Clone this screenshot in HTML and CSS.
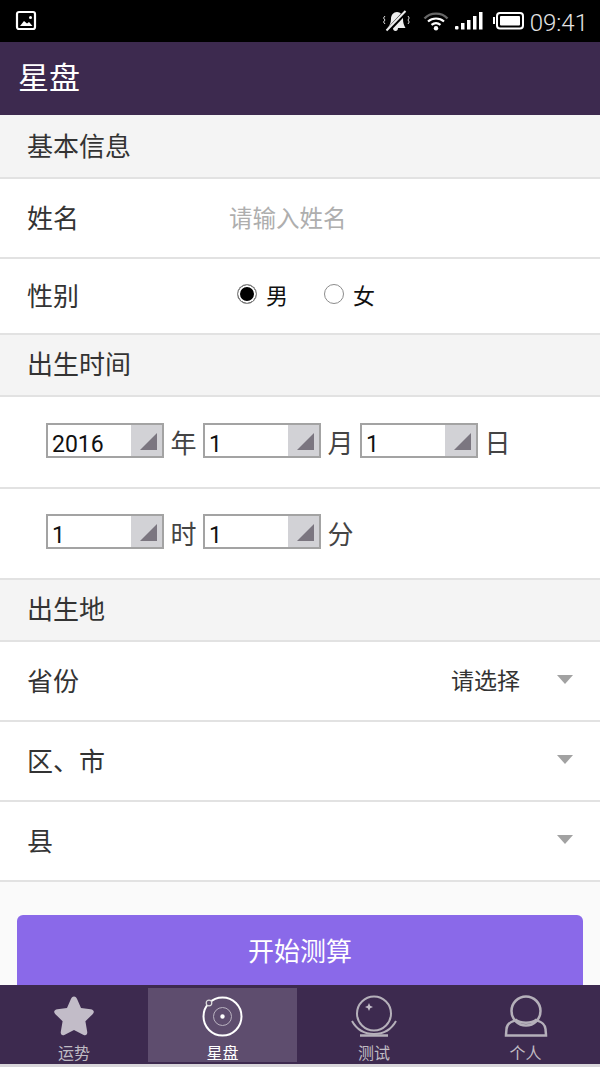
FILE: index.html
```html
<!DOCTYPE html>
<html lang="zh">
<head>
<meta charset="utf-8">
<title>星盘</title>
<link rel="stylesheet" href="styles.css">
</head>
<body>
<div class="page">
  <div class="statusbar">
    <svg class="st-pic" width="26" height="22" viewBox="0 0 26 22"><rect x="2" y="2" width="18" height="17" rx="2" fill="none" stroke="#fff" stroke-width="2.2"/><path d="M5 16l4-5 3 2.500 2-1.500 3.500 4z" fill="#fff"/><circle cx="15.500" cy="7.500" r="1.500" fill="#fff"/></svg>
    <div class="st-right">
      <svg width="27" height="22" viewBox="0 0 27 22"><path d="M14 2c3.500 0 6 3 6 7 0 4 1 6 2.500 9H15c0 2-1 3-2.500 3S10 20 10 18H4.500C6.500 15 8 13 8 9c0-4 2.500-7 6-7z" fill="#eee"/><path d="M4 21.500L23 1.500" stroke="#000" stroke-width="4.500"/><path d="M3.500 20.500L22.500 1" stroke="#eee" stroke-width="2"/><path d="M2 6l-1.500 2 1.500 2-1.500 2 1.500 2M25 6l1.200 2-1.200 2 1.200 2-1.200 2" fill="none" stroke="#ddd" stroke-width="1"/></svg>
      <svg class="st-wifi" width="26" height="20" viewBox="0 0 26 20"><path d="M1.500 7.500C7.500 1 18.500 1 24.500 7.500" fill="none" stroke="#666" stroke-width="2.400"/><path d="M5 10.500c4.500-4 11.500-4 16 0M8.500 13.800c2.800-2.200 6.200-2.200 9 0" fill="none" stroke="#fff" stroke-width="2.200"/><circle cx="13" cy="17.200" r="2.200" fill="#fff"/></svg>
      <svg class="st-signal" width="28" height="20" viewBox="0 0 28 20"><rect x="0" y="15" width="3.500" height="3.500" rx="1" fill="#fff"/><rect x="6" y="12" width="3.500" height="6.500" fill="#fff"/><rect x="12" y="9" width="3.500" height="9.500" fill="#fff"/><rect x="18" y="5" width="3.500" height="13.500" fill="#fff"/><rect x="24" y="1" width="3.500" height="17.500" fill="#fff"/></svg>
      <svg class="st-batt" width="31" height="20" viewBox="0 0 31 20"><rect x="4" y="2" width="26" height="15.500" rx="3" fill="none" stroke="#fff" stroke-width="2"/><rect x="7" y="5" width="20" height="9.500" rx="1" fill="#fff"/><rect x="0" y="6" width="2" height="7" fill="#fff"/></svg>
      <span class="st-time">09:41</span>
    </div>
  </div>
  <header class="appbar">星盘</header>
  <main class="content">
    <div class="section">基本信息</div>
    <div class="row row-name"><span class="label">姓名</span><span class="placeholder">请输入姓名</span></div>
    <div class="row row-sex">
      <span class="label">性别</span>
      <div class="radios">
        <span class="radio checked"></span><span class="radio-text">男</span>
        <span class="radio radio-second"></span><span class="radio-text">女</span>
      </div>
    </div>
    <div class="section section-s">出生时间</div>
    <div class="row row-date row-date-1">
      <span class="spinner"><span class="value">2016</span><span class="arrow"><i></i></span></span><span class="unit">年</span>
      <span class="spinner"><span class="value">1</span><span class="arrow"><i></i></span></span><span class="unit">月</span>
      <span class="spinner"><span class="value">1</span><span class="arrow"><i></i></span></span><span class="unit">日</span>
    </div>
    <div class="row row-date row-date-2">
      <span class="spinner"><span class="value">1</span><span class="arrow"><i></i></span></span><span class="unit">时</span>
      <span class="spinner"><span class="value">1</span><span class="arrow"><i></i></span></span><span class="unit">分</span>
    </div>
    <div class="section section-s">出生地</div>
    <div class="row row-place"><span class="label">省份</span><span class="choose">请选择</span><i class="caret"></i></div>
    <div class="row row-place"><span class="label">区、市</span><i class="caret"></i></div>
    <div class="row row-place"><span class="label">县</span><i class="caret"></i></div>
    <div class="btn-wrap"><div class="btn">开始测算</div></div>
  </main>
  <nav class="tabbar">
    <div class="tab tab-a">
      <svg width="44" height="46" viewBox="0 0 44 46"><path d="M22 2.500c1.500 0 2.500 1 3.300 3l3.700 8.500 9.600 1.200c3.200.4 4.300 2.700 2 5l-7.200 7 1.800 10.500c.5 3-1.500 4.300-4 3l-9.200-4.800-9.200 4.800c-2.500 1.300-4.500 0-4-3l1.800-10.500-7.200-7c-2.300-2.300-1.200-4.600 2-5L15 14l3.700-8.500c.8-2 1.800-3 3.300-3z" fill="#c2bcc8"/></svg>
      <span class="tab-text">运势</span>
    </div>
    <div class="tab tab-b active">
      <svg width="44" height="46" viewBox="0 0 44 46"><circle cx="21.500" cy="22.500" r="19" fill="none" stroke="#fff" stroke-width="2"/><circle cx="21.500" cy="22.500" r="9" fill="none" stroke="#b9b2c0" stroke-width="1"/><circle cx="21.500" cy="22.500" r="2.200" fill="#fff"/><circle cx="8" cy="9" r="2.800" fill="#5e4d6e" stroke="#ddd" stroke-width="1.200"/></svg>
      <span class="tab-text">星盘</span>
    </div>
    <div class="tab tab-c">
      <svg width="48" height="46" viewBox="0 0 48 46"><circle cx="24" cy="19.500" r="17" fill="none" stroke="#b5b0ba" stroke-width="2"/><path d="M2 27c5 9 12 13 22 13s17-4 22-13" fill="none" stroke="#b5b0ba" stroke-width="2"/><path d="M10 41.500h28" stroke="#b5b0ba" stroke-width="2.500"/><path d="M19 9l1.200 2.800L23 13l-2.800 1.200L19 17l-1.200-2.800L15 13l2.800-1.200z" fill="#c2bcc8"/></svg>
      <span class="tab-text">测试</span>
    </div>
    <div class="tab tab-d">
      <svg width="44" height="46" viewBox="0 0 44 46"><circle cx="22" cy="17" r="14.500" fill="none" stroke="#b5b0ba" stroke-width="2.500"/><path d="M12 26c-3 1.500-9 2-9.500 9-.2 3-.5 5-.5 6.500h40c0-1.500-.3-3.500-.5-6.500-.5-7-6.500-7.500-9.500-9-4 3.500-16 3.500-20 0z" fill="none" stroke="#b5b0ba" stroke-width="2.500"/></svg>
      <span class="tab-text">个人</span>
    </div>
  </nav>
  <div class="bottom-strip"></div>
</div>
</body>
</html>
```

FILE: styles.css
```css
* { box-sizing: border-box; }
html, body { margin: 0; padding: 0; }
body { width: 600px; height: 1067px; overflow: hidden; font-family: "Noto Sans CJK SC", "Roboto", sans-serif; background: #fafafa; }
.page { width: 600px; height: 1067px; display: flex; flex-direction: column; }

.statusbar { flex: 0 0 42px; height: 42px; background: #000; display: flex; align-items: center; justify-content: space-between; padding: 0 12px 0 15px; }
.st-pic { display: block; }
.st-right { display: flex; align-items: center; }
.st-wifi { margin-left: 13px; }
.st-signal { margin-left: 6px; }
.st-batt { margin-left: 10px; }
.st-time { font-family: Roboto, sans-serif; font-weight: 300; font-size: 24px; color: #e4e4e4; margin-left: 6px; line-height: 38px; padding-top: 4px; }

.appbar { flex: 0 0 73px; background: #3d2a4f; color: #fff; font-size: 31px; line-height: 68px; padding-left: 18px; }

.content { flex: 1 1 0; min-height: 0; overflow: hidden; display: flex; flex-direction: column; }

.section { flex: 0 0 auto; height: 64px; background: #f4f4f4; border-bottom: 2px solid #e2e2e2; color: #333; font-size: 26px; line-height: 60px; padding-left: 27px; }
.section-s { height: 62px; line-height: 56px; }

.row { flex: 0 0 auto; display: flex; align-items: center; background: #fff; border-bottom: 2px solid #e2e2e2; }
.label { color: #333; font-size: 26px; padding-left: 27px; }
.row-name { height: 80px; padding-bottom: 4px; }
.row-sex { height: 76px; padding-bottom: 4px; }
.placeholder { margin-left: 150px; color: #aeaeae; font-size: 23.500px; padding-top: 2px; }

.radios { display: flex; align-items: center; margin-left: 158px; color: #111; font-size: 22px; }
.radio { width: 20px; height: 20px; border-radius: 50%; border: 1.500px solid #8c8c8c; background: #fff; display: block; }
.radio.checked { background: #000; box-shadow: inset 0 0 0 2px #fff; }
.radio-text { margin-left: 9px; }
.radio-second { margin-left: 36px; }

.row-date { padding-left: 46px; }
.row-date-1 { height: 92px; padding-bottom: 4px; }
.row-date-2 { height: 91px; padding-bottom: 4px; }
.spinner { width: 118px; height: 35px; border: 2px solid #a3a3a3; background: #fff; display: flex; justify-content: space-between; }
.value { font-family: Roboto, sans-serif; font-size: 23px; line-height: 39px; color: #111; padding-left: 4px; }
.arrow { width: 31px; background: #d2d2d6; display: flex; align-items: flex-end; justify-content: flex-end; padding: 0 5px 6px 0; }
.arrow i { display: block; width: 0; height: 0; border-style: solid; border-width: 0 0 17px 17px; border-color: transparent transparent #7b7680 transparent; }
.unit { width: 39px; text-align: center; font-size: 26px; color: #444; padding-top: 2px; }

.row-place { height: 80px; padding-bottom: 4px; }
.row-place .label { flex: 1 1 auto; }
.choose { font-size: 23px; color: #333; margin-right: 37px; }
.caret { display: block; width: 0; height: 0; margin-right: 27px; border-style: solid; border-width: 9px 8px 0 8px; border-color: #a2a2a2 transparent transparent transparent; }

.btn-wrap { flex: 0 0 auto; padding: 33px 17px 0; }
.btn { height: 80px; background: #8a69e9; border-radius: 6px 6px 0 0; color: #fff; font-size: 26px; line-height: 70px; text-align: center; }

.tabbar { flex: 0 0 79px; background: #3d2a4f; display: flex; padding-top: 3px; align-items: stretch; }
.tab { height: 74px; display: flex; flex-direction: column; align-items: center; }
.tab-a { width: 148px; }
.tab-b { width: 149px; }
.tab-c { width: 154px; }
.tab-d { width: 149px; }
.tab svg { display: block; margin-top: 6px; flex: 0 0 46px; }
.tab.active { background: #5e4d6e; }
.tab-text { font-size: 16px; line-height: 18px; color: #c0bcc4; margin-top: 3px; }
.tab.active .tab-text { color: #fff; }
.bottom-strip { flex: 0 0 3px; background: #d8d6da; }
```
